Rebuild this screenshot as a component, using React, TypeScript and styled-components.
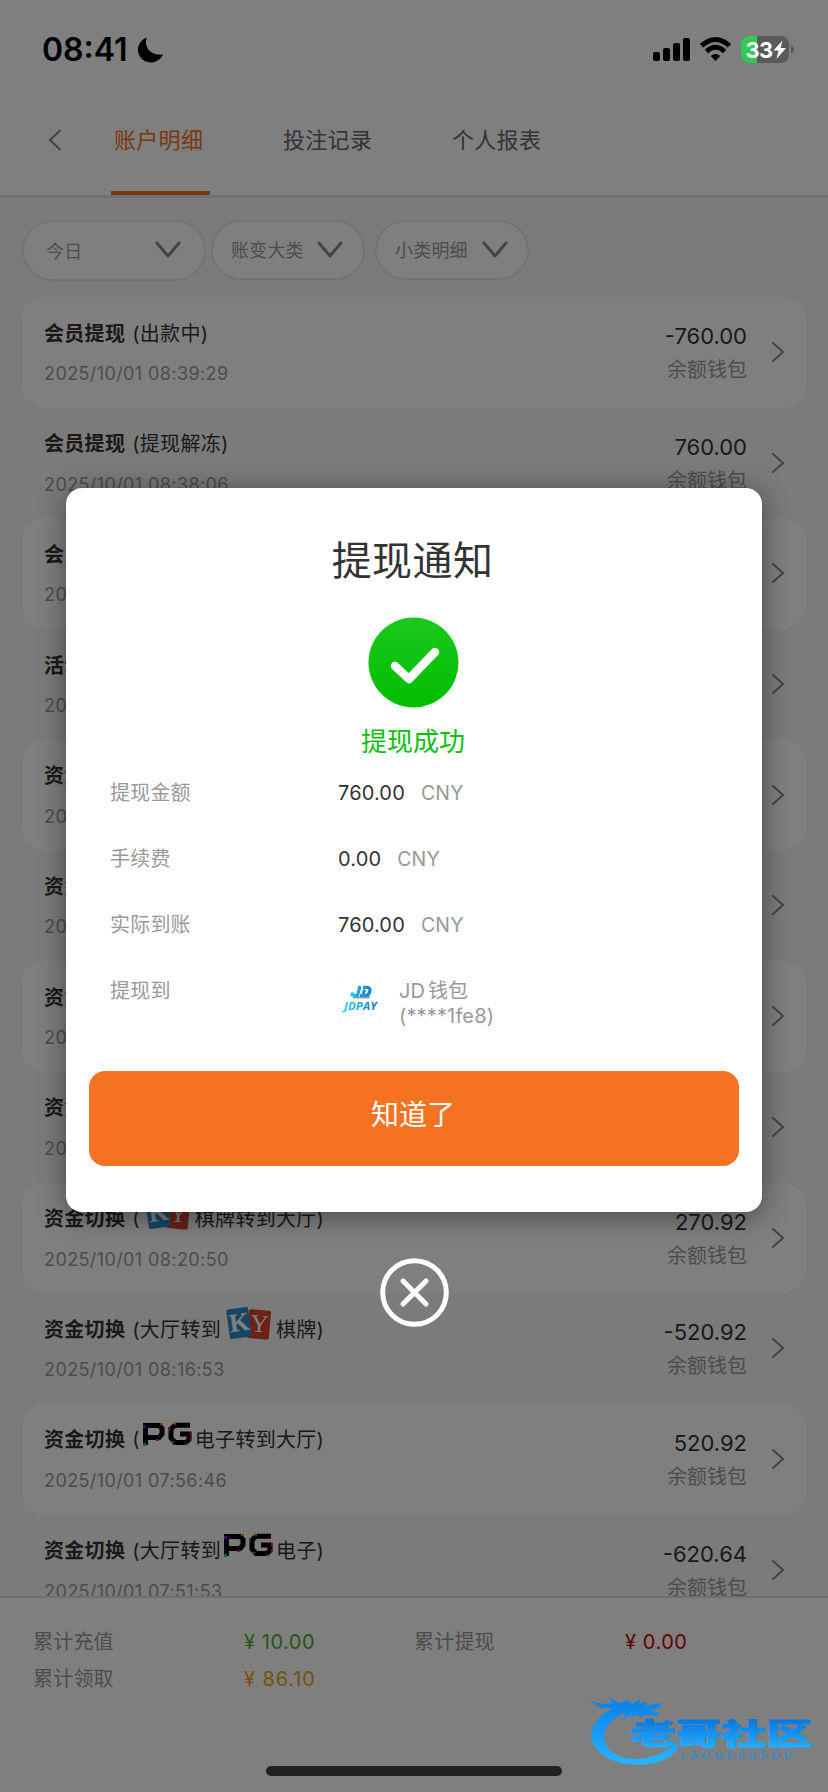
import React from "react";
import styled, { createGlobalStyle } from "styled-components";

const Global = createGlobalStyle`
  * { box-sizing: border-box; }
  html, body { margin: 0; padding: 0; }
  body {
    width: 828px; height: 1792px; overflow: hidden;
    font-family: Inter, "Noto Sans CJK SC", sans-serif;
    background: #808080;
  }
`;

const Screen = styled.main`
  position: relative;
  width: 828px;
  height: 1792px;
  overflow: hidden;
  display: flex;
  flex-direction: column;
  background: #f6f6f6;
`;

const Header = styled.header`
  flex: none;
  height: 198px;
  padding: 85px 0 0 48px;
  display: flex;
  background: #fff;
  border-bottom: 3px solid #e2e2e2;
`;

const BackButton = styled.button`
  width: 63px;
  height: 110px;
  padding: 0;
  border: 0;
  background: none;
  display: flex;
  align-items: center;
`;

const Tab = styled.button<{ $active?: boolean }>`
  width: 99px;
  height: 110px;
  margin-right: 70px;
  padding: 3px 0 0 3px;
  border: 0;
  border-bottom: 4px solid ${(p) => (p.$active ? "#f37121" : "transparent")};
  background: none;
  font: 400 22px/104px Inter, "Noto Sans CJK SC", sans-serif;
  letter-spacing: 0.3px;
  white-space: nowrap;
  text-align: left;
  color: ${(p) => (p.$active ? "#f37121" : "#666")};
`;

const Filters = styled.div`
  flex: none;
  height: 99px;
  padding: 22px 22px 0;
  display: flex;
  align-items: flex-start;
`;

const Pill = styled.div<{ $w: number; $h: number; $pad: string; $gap: number }>`
  width: ${(p) => p.$w}px;
  height: ${(p) => p.$h}px;
  margin-right: ${(p) => p.$gap}px;
  padding: ${(p) => p.$pad};
  display: flex;
  align-items: center;
  justify-content: space-between;
  border: 2px solid #e6e6e6;
  border-radius: 31px;
  background: #fff;
  font-size: 18px;
  letter-spacing: 0.2px;
  color: #999;
`;

const List = styled.div`
  flex: none;
  height: 1299px;
  padding: 0 22px;
  overflow: hidden;
`;

const Row = styled.article<{ $filled: boolean }>`
  height: 110.7px;
  padding: 0 22px 0 22px;
  display: flex;
  border-radius: 22px;
  background: ${(p) => (p.$filled ? "#fff" : "transparent")};
`;

const RowMain = styled.div`
  flex: 1;
  padding-top: 20px;
  white-space: nowrap;
`;

const RowTitle = styled.div`
  height: 30px;
  display: flex;
  align-items: center;
  font-size: 20px;
  letter-spacing: 0.3px;
  color: #333;
`;

const Strong = styled.b`
  margin-right: 7px;
  font-weight: 700;
`;

const RowDate = styled.div`
  margin-top: 15px;
  font-size: 18px;
  line-height: 24px;
  letter-spacing: 0.4px;
  color: #999;
`;

const RowSide = styled.div`
  padding-top: 24px;
  margin-right: 25px;
  text-align: right;
`;

const Amount = styled.div`
  font-size: 22px;
  line-height: 30px;
  color: #333;
`;

const Wallet = styled.div`
  margin-top: 4px;
  font-size: 20px;
  line-height: 30px;
  color: #999;
`;

const RowArrow = styled.div`
  padding-top: 45px;
  height: 66px;
`;

const Footer = styled.footer`
  flex: 1;
  padding: 26px 33px 0;
  border-top: 2px solid #e0e0e0;
  background: #fff;
  display: grid;
  grid-template-columns: 211px 170px 211px 1fr;
  grid-auto-rows: 37px;
  align-content: start;
`;

const SumLabel = styled.span`
  font-size: 20px;
  line-height: 37px;
  letter-spacing: 0.2px;
  color: #999;
`;

const Sum = styled.span<{ $color: string; $track?: number }>`
  font-size: 20px;
  line-height: 37px;
  letter-spacing: ${(p) => p.$track ?? 0.55}px;
  color: ${(p) => p.$color};
`;

const Overlay = styled.div`
  position: absolute;
  inset: 0;
  padding-top: 488px;
  display: flex;
  flex-direction: column;
  align-items: center;
  background: rgba(0, 0, 0, 0.5);
`;

const Modal = styled.section`
  width: 696px;
  height: 724px;
  padding: 42px 23px 0;
  border-radius: 16px;
  background: #fff;
  box-shadow: 0 4px 28px rgba(0, 0, 0, 0.45);
`;

const ModalTitle = styled.h1`
  margin: 0;
  padding-right: 3px;
  font-size: 40px;
  font-weight: 400;
  line-height: 62px;
  letter-spacing: 0.4px;
  text-align: center;
  color: #333;
`;

const Status = styled.div`
  margin-top: 25px;
  padding-right: 2px;
  display: flex;
  flex-direction: column;
  align-items: center;
  font-size: 26px;
  line-height: 40px;
  color: #08c108;
`;

const StatusText = styled.span`
  margin-top: 14px;
`;

const Details = styled.dl`
  margin: 16px 0 0;
  padding-left: 21px;
  height: 293px;
`;

const Detail = styled.div`
  height: 66px;
  display: flex;
  font-size: 20px;
  line-height: 30px;
`;

const Label = styled.dt`
  width: 228px;
  letter-spacing: 0.2px;
  color: #999;
`;

const Value = styled.dd`
  margin: 0;
  display: flex;
  color: #333;
  letter-spacing: 0.15px;
`;

const Currency = styled.span`
  margin-left: 16px;
  font-size: 19.5px;
  color: #999;
`;

const PayName = styled.span`
  margin: 3px 0 0 15px;
  line-height: 25px;
  word-spacing: -3px;
  color: #999;
`;

const Confirm = styled.button`
  width: 650px;
  height: 95px;
  padding: 0 2px 11px 0;
  border: 0;
  border-radius: 16px;
  background: #f57222;
  color: #fff;
  font: 400 28px Inter, "Noto Sans CJK SC", sans-serif;
`;

const CloseButton = styled.button`
  margin-top: 46px;
  padding: 0;
  border: 0;
  background: none;
  line-height: 0;
`;

const StatusBar = styled.div`
  position: absolute;
  inset: 0 0 auto 0;
  height: 99px;
  padding: 0 33px 0 42px;
  display: flex;
  align-items: center;
`;

const Clock = styled.span`
  font-size: 32px;
  font-weight: 600;
  width: 96px;
  white-space: nowrap;
  color: #000;
`;

const Spacer = styled.span`
  flex: 1;
`;

const HomeBar = styled.div`
  position: absolute;
  left: 266px;
  bottom: 16px;
  width: 296px;
  height: 10px;
  border-radius: 5px;
  background: #222;
`;

const Watermark = styled.svg`
  position: absolute;
  left: 588px;
  top: 1692px;
`;

const ProviderIcon = styled.svg`
  flex: none;
  margin-bottom: 10px;
`;

const CardsLogo = () => (
  <ProviderIcon width="55" height="34" viewBox="1 0 55 34">
    <g transform="rotate(5 40 18)">
      <rect x="28" y="4" width="22" height="29" rx="2" fill="#d8402c" />
      <text x="39.500" y="26" fontSize="25" fontFamily="Liberation Serif, serif" fill="#fff" textAnchor="middle">Y</text>
    </g>
    <g transform="rotate(-8 19 17)">
      <rect x="8" y="2" width="22" height="30" rx="2" fill="#2a8fc8" />
      <text x="19.500" y="25" fontSize="26" fontWeight="700" fontFamily="Liberation Serif, serif" fill="#fff" textAnchor="middle">K</text>
    </g>
  </ProviderIcon>
);

const PixelLogo = () => (
  <ProviderIcon width="55" height="26" viewBox="1 0 55 26">
    <g fill="none" stroke="#000" strokeWidth="5">
      <path d="M6.500 24V4.500H20L23 7.500V13L20 16.500H9" />
      <path d="M51 4.200H36L32 8V17L36 21.500H47L50 18.500V13H41" />
    </g>
    <path d="M4 4h3v3H4z" fill="#6a20e0" />
    <path d="M4 22h3v3H4z" fill="#12b8d8" />
    <path d="M21 2h3v2h-3z" fill="#f08020" />
    <path d="M17 18h3v2h-3z" fill="#e018c0" />
    <path d="M29 6h2v3h-2z" fill="#e0187a" />
    <path d="M34 1.500h3v2h-3z" fill="#f0b010" />
    <path d="M32 20h3v2h-3z" fill="#1898e0" />
    <path d="M51 11h2v3h-2zM51 17h2v3h-2z" fill="#e83020" />
    <path d="M46 22.500h3v2h-3z" fill="#f07020" />
  </ProviderIcon>
);

const Down = () => (
  <svg width="26" height="17" viewBox="0 0 26 17" fill="none" stroke="#888" strokeWidth="3" strokeLinecap="round" strokeLinejoin="round">
    <path d="M2 2l11 13L24 2" />
  </svg>
);

type Entry = { title: string; note: React.ReactNode; date: string; amount: string };

const entries: Entry[] = [
  { title: "会员提现", note: "(出款中)", date: "2025/10/01 08:39:29", amount: "-760.00" },
  { title: "会员提现", note: "(提现解冻)", date: "2025/10/01 08:38:06", amount: "760.00" },
  { title: "会员", note: "", date: "2025", amount: "" },
  { title: "活动", note: "", date: "2025", amount: "" },
  { title: "资金", note: "", date: "2025", amount: "" },
  { title: "资金", note: "", date: "2025", amount: "" },
  { title: "资金", note: "", date: "2025", amount: "" },
  { title: "资金", note: "", date: "2025", amount: "" },
  { title: "资金切换", note: <>(<CardsLogo />棋牌转到大厅)</>, date: "2025/10/01 08:20:50", amount: "270.92" },
  { title: "资金切换", note: <>(大厅转到<CardsLogo />棋牌)</>, date: "2025/10/01 08:16:53", amount: "-520.92" },
  { title: "资金切换", note: <>(<PixelLogo />电子转到大厅)</>, date: "2025/10/01 07:56:46", amount: "520.92" },
  { title: "资金切换", note: <>(大厅转到<PixelLogo />电子)</>, date: "2025/10/01 07:51:53", amount: "-620.64" },
];

export default function App() {
  return (
    <Screen>
      <Global />
      <Header>
        <BackButton aria-label="返回">
          <svg width="14" height="22" viewBox="0 0 14 22" fill="none" stroke="#888" strokeWidth="2">
            <path d="M12.500 1L2 11l10.500 10" />
          </svg>
        </BackButton>
        <Tab $active>账户明细</Tab>
        <Tab>投注记录</Tab>
        <Tab>个人报表</Tab>
      </Header>

      <Filters>
        <Pill $w={184} $h={61} $gap={5} $pad="0 23px 2px 22px">今日<Down /></Pill>
        <Pill $w={154} $h={60} $gap={10} $pad="0 20px 2px 18px">账变大类<Down /></Pill>
        <Pill $w={154} $h={60} $gap={0} $pad="0 19px 2px 18px">小类明细<Down /></Pill>
      </Filters>

      <List>
        {entries.map((e, i) => (
          <Row key={i} $filled={i % 2 === 0}>
            <RowMain>
              <RowTitle><Strong>{e.title}</Strong>{e.note}</RowTitle>
              <RowDate>{e.date}</RowDate>
            </RowMain>
            {e.amount && (
              <RowSide>
                <Amount>{e.amount}</Amount>
                <Wallet>余额钱包</Wallet>
              </RowSide>
            )}
            <RowArrow>
              <svg width="12" height="20" viewBox="0 0 12 20" fill="none" stroke="#888" strokeWidth="2" strokeLinecap="round">
                <path d="M1 1l10 9L1 19" />
              </svg>
            </RowArrow>
          </Row>
        ))}
      </List>

      <Footer>
        <SumLabel>累计充值</SumLabel>
        <Sum $color="#4caf22">¥ 10.00</Sum>
        <SumLabel>累计提现</SumLabel>
        <Sum $color="#c80000">¥ 0.00</Sum>
        <SumLabel>累计领取</SumLabel>
        <Sum $color="#e6a800" $track={0.9}>¥ 86.10</Sum>
      </Footer>

      <Overlay>
        <Modal>
          <ModalTitle>提现通知</ModalTitle>
          <Status>
            <svg width="91" height="91" viewBox="0 0 91 91">
              <defs>
                <linearGradient id="ok" x1="0" y1="0" x2="0" y2="1">
                  <stop offset="0" stopColor="#1dc81d" />
                  <stop offset="1" stopColor="#00be00" />
                </linearGradient>
              </defs>
              <circle cx="45.500" cy="45.500" r="45" fill="url(#ok)" />
              <path d="M27 49L41 62L67 35" fill="none" stroke="#fff" strokeWidth="8.500" strokeLinecap="round" strokeLinejoin="round" />
            </svg>
            <StatusText>提现成功</StatusText>
          </Status>
          <Details>
            <Detail><Label>提现金额</Label><Value>760.00<Currency>CNY</Currency></Value></Detail>
            <Detail><Label>手续费</Label><Value>0.00<Currency>CNY</Currency></Value></Detail>
            <Detail><Label>实际到账</Label><Value>760.00<Currency>CNY</Currency></Value></Detail>
            <Detail>
              <Label>提现到</Label>
              <Value>
                <svg width="46" height="50" viewBox="0 1 46 50">
                  <defs>
                    <linearGradient id="pay" gradientUnits="userSpaceOnUse" x1="6" y1="0" x2="40" y2="0">
                      <stop offset="0" stopColor="#14d3e0" />
                      <stop offset="1" stopColor="#1a70c8" />
                    </linearGradient>
                  </defs>
                  <path d="M1 45q1 2 3 2.500M44 6q-1-2-3-2.500M44 45q-1 2-3 2.500M1 6q1-2 3-2.500" stroke="#eee" fill="none" />
                  <path d="M15 21.500H30Q32.500 20.500 32 22.500L31 23.500H15Z" fill="#999" />
                  <g fill="none" stroke="url(#pay)" strokeWidth="3.200">
                    <path d="M22 11L19.500 20.500H15.500" />
                    <path d="M26.500 14.500L25 20.500M25 12.300H29Q32.800 13 31.800 16.500Q30.800 20.500 27.500 20.500H22" />
                  </g>
                  <circle cx="14.500" cy="19.500" r="2.200" fill="#14d3e0" />
                  <text x="6" y="34.500" textLength="33" lengthAdjust="spacingAndGlyphs" fontFamily="Open Sans, sans-serif" fontStyle="italic" fontWeight="700" fontSize="10" fill="url(#pay)">JDPAY</text>
                </svg>
                <PayName>JD 钱包<br />(****1fe8)</PayName>
              </Value>
            </Detail>
          </Details>
          <Confirm>知道了</Confirm>
        </Modal>
        <CloseButton aria-label="关闭">
          <svg width="69" height="69" viewBox="0 0 69 69" fill="none" stroke="#fff" strokeLinecap="round">
            <circle cx="34.500" cy="34.500" r="31.800" strokeWidth="5" />
            <path d="M23 23l23 23M46 23l-23 23" strokeWidth="5" />
          </svg>
        </CloseButton>
      </Overlay>

      <StatusBar>
        <Clock>08:41</Clock>
        <svg width="26" height="26" viewBox="0 0 26 26">
          <path d="M9 .5C5 9 12 19 25 17.500A13 12.800 0 1 1 9 .5Z" fill="#000" />
        </svg>
        <Spacer />
        <svg width="142" height="28" viewBox="0 0 142 28">
          <g fill="#000">
            <rect x="0" y="16" width="7" height="9" rx="2" />
            <rect x="10" y="12" width="7" height="13" rx="2" />
            <rect x="20" y="7" width="7" height="18" rx="2" />
            <rect x="30" y="2" width="7" height="23" rx="2" />
            <path d="M62.500 25L57.700 20Q62.500 15.800 67.300 20Z" />
          </g>
          <g fill="none" stroke="#000" strokeWidth="4.800">
            <path d="M48.500 9.800Q62.500 -2.800 76.500 9.800" />
            <path d="M53.400 15.500Q62.500 7.200 71.600 15.500" />
          </g>
          <clipPath id="cell"><rect x="88" y="0" width="48" height="27" rx="8" /></clipPath>
          <g clipPath="url(#cell)">
            <rect x="88" y="0" width="48" height="27" fill="#5a5a5a" />
            <rect x="88" y="0" width="16" height="27" fill="#34c759" />
          </g>
          <path d="M138 9q3 1 3 4.500t-3 4.500z" fill="#5a5a5a" />
          <text x="92.500" y="21.500" fontFamily="Inter, sans-serif" fontWeight="700" fontSize="22" letterSpacing="-0.600" fill="#fff">33</text>
          <path d="M129.500 4.500L120.500 14.500H125.500L123.500 23L133 12H127.500Z" fill="#fff" />
        </svg>
      </StatusBar>

      <Watermark width="226" height="78" viewBox="0 0 226 78">
        <defs>
          <linearGradient id="wm" gradientUnits="userSpaceOnUse" x1="0" y1="5" x2="0" y2="72">
            <stop offset="0" stopColor="#0580e8" />
            <stop offset="1" stopColor="#28b4ff" />
          </linearGradient>
          <linearGradient id="wt" gradientUnits="userSpaceOnUse" x1="0" y1="28" x2="0" y2="57">
            <stop offset="0" stopColor="#0878e0" />
            <stop offset="1" stopColor="#25b0ff" />
          </linearGradient>
        </defs>
        <path d="M32 14C8 20-4 42 8 56C22 78 77 79 90 56L91 46C78 67 38 74 22 58C8 44 20 25 43 19Z" fill="url(#wm)" />
        <path d="M2 9L15 12L25 11L20 5L31 11L40 8L45 12L52 7L51 12L59 9L57 14L67 12L73 11L72 15L63 19L72 21L70 24L59 23L53 25L48 23L43 26L44 22L34 28L38 20L31 21L25 16L13 16Z" fill="url(#wm)" />
        <text x="42" y="53" textLength="182" lengthAdjust="spacingAndGlyphs" fontFamily="Noto Sans CJK SC, sans-serif" fontWeight="900" fontSize="29" fill="url(#wt)" stroke="url(#wt)" strokeWidth="1">老哥社区</text>
        <text x="93" y="67" textLength="110" fontFamily="Liberation Sans, sans-serif" fontSize="10" fill="#168eea">LAOGESHEQU</text>
      </Watermark>
      <HomeBar />
    </Screen>
  );
}
